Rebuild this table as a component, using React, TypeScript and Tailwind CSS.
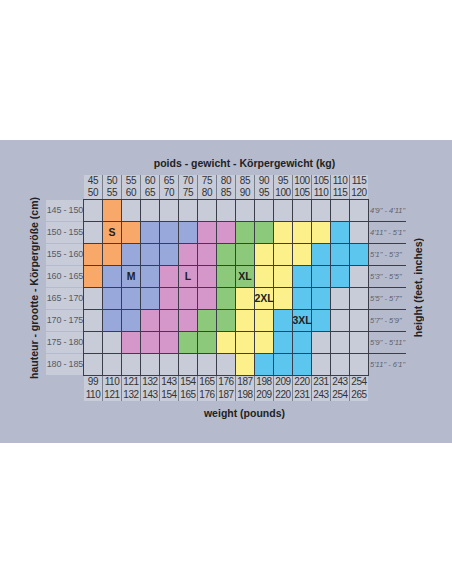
const C: Record<string, string> = {
  g: "bg-[#c8ccd9]",
  o: "bg-[#f8a96a]",
  b: "bg-[#99a8da]",
  p: "bg-[#d597ca]",
  n: "bg-[#8dc97a]",
  y: "bg-[#fcf08b]",
  c: "bg-[#5cc6ef]",
};

// one string per height row, one letter per weight column
const grid = [
  "goggggggggggggg",
  "goobbbppnnyyycg",
  "oobbbppnnyyyccc",
  "obbbpppnnyycccg",
  "gbbbpppnyyyccgg",
  "gbbpppnnyycccgg",
  "ggpppnnyyyccggg",
  "ggggggggycccggg",
];

const sizes: Record<string, string> = {
  "1-1": "S",
  "3-2": "M",
  "3-5": "L",
  "3-8": "XL",
  "4-9": "2XL",
  "5-11": "3XL",
};

const kgTop = [45, 50, 55, 60, 65, 70, 75, 80, 85, 90, 95, 100, 105, 110, 115];
const kgBottom = kgTop.map((k) => k + 5);
const lbTop = [99, 110, 121, 132, 143, 154, 165, 176, 187, 198, 209, 220, 231, 243, 254];
const lbBottom = [110, 121, 132, 143, 154, 165, 176, 187, 198, 209, 220, 231, 243, 254, 265];
const cm = ["145 - 150", "150 - 155", "155 - 160", "160 - 165", "165 - 170", "170 - 175", "175 - 180", "180 - 185"];
const ft = [
  `4'9" - 4'11"`,
  `4'11" - 5'1"`,
  `5'1" - 5'3"`,
  `5'3" - 5'5"`,
  `5'5" - 5'7"`,
  `5'7" - 5'9"`,
  `5'9" - 5'11"`,
  `5'11" - 6'1"`,
];

function ScaleRow({ top, bottom, lead }: { top: number[]; bottom: number[]; lead: string }) {
  return (
    <div className="ml-px grid w-[284px] grid-cols-[repeat(15,18px)] gap-x-px bg-[#7b7f8c]">
      {top.map((t, i) => (
        <div key={i} className={`bg-[#c8ccd9] text-center text-[10px] tracking-[-0.4px] text-[#333] ${lead}`}>
          <div>{t}</div>
          <div>{bottom[i]}</div>
        </div>
      ))}
    </div>
  );
}

export default function App() {
  return (
    <div className="h-[584px] w-[452px] bg-white font-['Liberation_Sans',Arial,sans-serif]">
      <div className="h-[140px]" />
      <section className="h-[303px] bg-[#b5bbcd] pt-[16px]">
        <div className="grid grid-cols-[46px_37px_286px_37px_1fr] grid-rows-[14px_29px_177px_25px_19px]">
          {/* title */}
          <h2 className="col-span-2 col-start-3 text-center text-[10.5px] font-bold leading-[14px] text-[#222]">
            poids - gewicht - Körpergewicht (kg)
          </h2>

          {/* kg scale */}
          <div className="col-start-3 row-start-2 pt-[5px]">
            <ScaleRow top={kgTop} bottom={kgBottom} lead="leading-[12px]" />
          </div>

          {/* left vertical label */}
          <div className="col-start-1 row-start-3 flex items-center justify-end pr-[5px]">
            <span className="h-max rotate-180 whitespace-nowrap text-[10.5px] font-bold leading-[13px] text-[#222] [writing-mode:vertical-rl]">
              hauteur - grootte - Körpergröße (cm)
            </span>
          </div>

          {/* cm labels */}
          <div className="col-start-2 row-start-3 flex flex-col gap-px pt-px">
            {cm.map((c) => (
              <div key={c} className="flex h-[21px] items-center justify-end bg-[#c8ccd9] text-[9px] tracking-[-0.2px] text-[#555a66]">
                {c}
              </div>
            ))}
          </div>

          {/* size chart */}
          <div className="col-start-3 row-start-3 grid h-[177px] grid-cols-[repeat(15,18px)] grid-rows-[repeat(8,21px)] gap-px border border-[#3b3d48] bg-[#3b3d48]">
            {grid.map((r, ri) =>
              r.split("").map((k, ci) => (
                <div key={`${ri}-${ci}`} className={`flex items-center justify-center ${C[k]}`}>
                  {sizes[`${ri}-${ci}`] && (
                    <span className="whitespace-nowrap text-[10.5px] font-bold text-[#222]">{sizes[`${ri}-${ci}`]}</span>
                  )}
                </div>
              ))
            )}
          </div>

          {/* feet labels */}
          <div className="col-start-4 row-start-3 flex flex-col pt-px">
            {ft.map((f, i) => (
              <div
                key={f}
                className={`flex items-center pl-px text-[7.5px] italic text-[#5d616c] ${i < 7 ? "h-[22px] border-b border-[#3b3d48]" : "h-[21px]"}`}
              >
                {f}
              </div>
            ))}
          </div>

          {/* right vertical label */}
          <div className="col-start-5 row-start-3 flex items-center pl-[6px]">
            <span className="h-max rotate-180 whitespace-nowrap text-[10.5px] font-bold leading-[13px] text-[#222] [writing-mode:vertical-rl]">
              height (feet, inches)
            </span>
          </div>

          {/* lb scale */}
          <div className="col-start-3 row-start-4">
            <ScaleRow top={lbTop} bottom={lbBottom} lead="leading-[12.5px]" />
          </div>

          <div className="col-span-2 col-start-3 row-start-5 pt-[5px] text-center text-[10.5px] font-bold leading-[14px] text-[#222]">
            weight (pounds)
          </div>
        </div>
      </section>
    </div>
  );
}
